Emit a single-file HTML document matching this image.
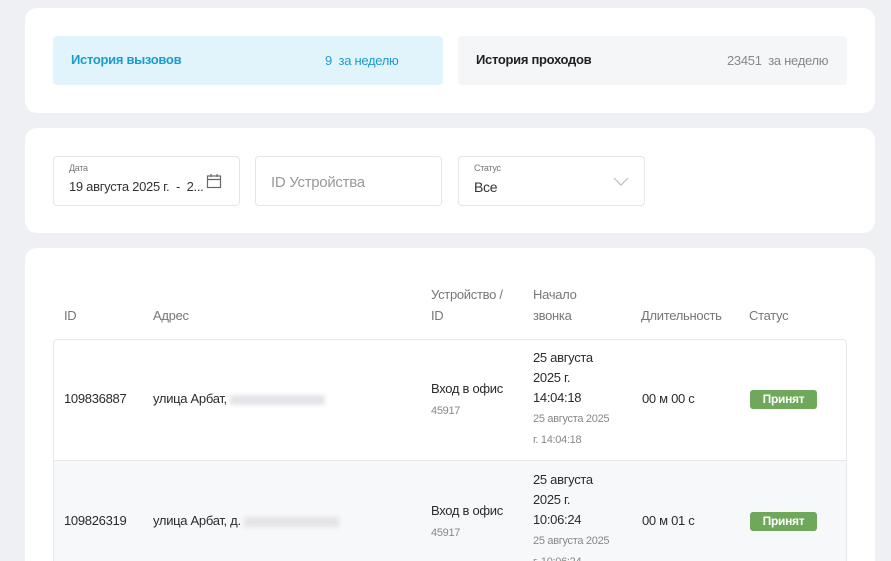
<!DOCTYPE html>
<html style="width:891px;height:561px;overflow:hidden"><head><meta charset="utf-8"><style>
*{box-sizing:border-box;margin:0;padding:0}
body{width:891px;height:561px;overflow:hidden;background:#eef0f4;font-family:"Liberation Sans",sans-serif;color:#2b2b2b;position:relative;font-size:13px;letter-spacing:-0.3px}
.card{position:absolute;left:25px;width:850px;background:#fff;border-radius:12px}
.abs{position:absolute}
.tab{position:absolute;top:28px;height:49px;border-radius:4px;font-size:13px}
.inp{position:absolute;top:28px;height:50px;border:1px solid #e4e6ea;border-radius:4px;background:#fff}
.lbl{position:absolute;left:15px;top:6px;font-size:9px;color:#777}
.val{position:absolute;left:15px;top:22px;font-size:14px;color:#333}
.th{position:absolute;font-size:13px;color:#777;line-height:21px}
.row{position:absolute;left:53px;width:794px;border:1px solid #e6e8ec}
.c{position:absolute;font-size:13px;line-height:21px}
.g{color:#888;font-size:11px;line-height:20px}
.badge{position:absolute;left:696px;width:67px;height:19px;background:#6fa85a;color:#fff;font-weight:bold;font-size:12px;text-align:center;line-height:19px;border-radius:3px}
.blur{display:inline-block;width:95px;height:10px;background:#e4e4e8;filter:blur(2px);vertical-align:middle}
</style></head><body>
<div class="card" style="top:8px;height:105px">
 <div class="tab" style="left:28px;width:390px;background:#e2f4fb;color:#1b9ccb">
  <span class="abs" style="left:18px;top:16px;font-weight:bold">История вызовов</span>
  <span class="abs" style="left:272px;top:17px">9&nbsp; за неделю</span></div>
 <div class="tab" style="left:433px;width:389px;background:#f5f6f8">
  <span class="abs" style="left:18px;top:16px;font-weight:bold;color:#222">История проходов</span>
  <span class="abs" style="left:269px;top:17px;color:#888">23451&nbsp; за неделю</span></div>
</div>
<div class="card" style="top:128px;height:105px">
 <div class="inp" style="left:28px;width:187px"><span class="lbl">Дата</span><span class="val" style="font-size:13px">19 августа 2025 г.&nbsp; -&nbsp; 2...</span>
  <svg class="abs" style="left:152px;top:16px" width="16" height="16" viewBox="0 0 16 16" fill="none" stroke="#666" stroke-width="1.2"><rect x="1.5" y="3" width="13" height="11.5"/><path d="M1.5 6.5h13M5 1v3M11 1v3"/></svg></div>
 <div class="inp" style="left:230px;width:187px"><span class="val" style="top:17px;color:#999;font-size:15px">ID Устройства</span></div>
 <div class="inp" style="left:433px;width:187px"><span class="lbl">Статус</span><span class="val">Все</span>
  <svg class="abs" style="left:154px;top:20px" width="16" height="10" viewBox="0 0 16 10" fill="none" stroke="#bbb" stroke-width="1.2"><path d="M1 1l7 7 7-7"/></svg></div>
</div>
<div class="card" style="top:248px;height:313px;border-radius:12px 12px 0 0"></div>
<div class="th" style="left:64px;top:305px">ID</div>
<div class="th" style="left:153px;top:305px">Адрес</div>
<div class="th" style="left:431px;top:284px">Устройство /<br>ID</div>
<div class="th" style="left:533px;top:284px">Начало<br>звонка</div>
<div class="th" style="left:641px;top:305px">Длительность</div>
<div class="th" style="left:749px;top:305px">Статус</div>
<div class="row" style="top:339px;height:122px;border-radius:4px 4px 0 0;background:#fff">
 <div class="c" style="left:10px;top:48px">109836887</div>
 <div class="c" style="left:99px;top:48px">улица Арбат, <span class="blur"></span></div>
 <div class="c" style="left:377px;top:38px">Вход в офис<br><span class="g">45917</span></div>
 <div class="c" style="left:479px;top:8px;line-height:20px">25 августа<br>2025 г.<br>14:04:18<br><span class="g">25 августа 2025<br>г. 14:04:18</span></div>
 <div class="c" style="left:588px;top:48px">00 м 00 с</div>
 <div class="badge" style="top:50px">Принят</div>
</div>
<div class="row" style="top:460px;height:101px;border-bottom:none;background:#f7f8fa;overflow:hidden">
 <div class="c" style="left:10px;top:49px">109826319</div>
 <div class="c" style="left:99px;top:49px">улица Арбат, д. <span class="blur"></span></div>
 <div class="c" style="left:377px;top:39px">Вход в офис<br><span class="g">45917</span></div>
 <div class="c" style="left:479px;top:9px;line-height:20px">25 августа<br>2025 г.<br>10:06:24<br><span class="g">25 августа 2025<br>г. 10:06:24</span></div>
 <div class="c" style="left:588px;top:49px">00 м 01 с</div>
 <div class="badge" style="top:51px">Принят</div>
</div>
</body></html>
